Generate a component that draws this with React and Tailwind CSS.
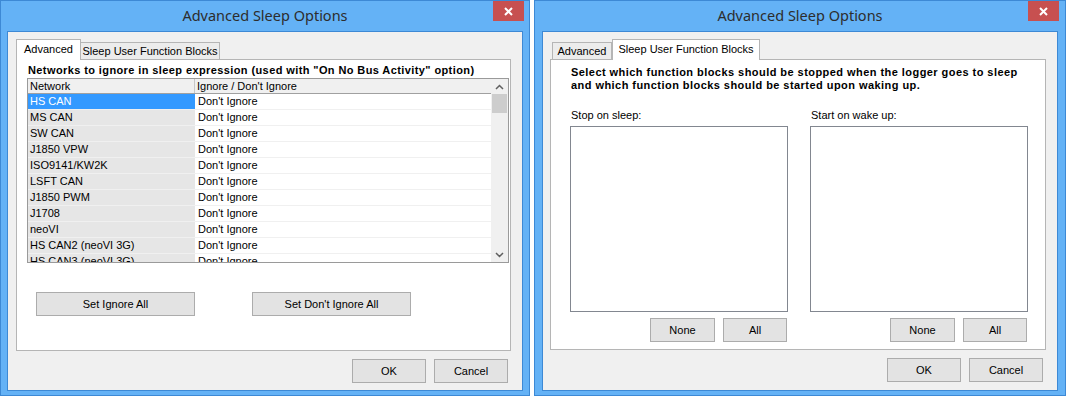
import React from 'react';

const networks = [
  'HS CAN',
  'MS CAN',
  'SW CAN',
  'J1850 VPW',
  'ISO9141/KW2K',
  'LSFT CAN',
  'J1850 PWM',
  'J1708',
  'neoVI',
  'HS CAN2 (neoVI 3G)',
  'HS CAN3 (neoVI 3G)',
];

const uiFont = "font-['Liberation_Sans',Arial,sans-serif]";

const Btn = ({ w, children }) => (
  <button
    className={`${w} h-[24px] border border-[#acacac] bg-[#e3e3e3] text-[11px] text-black ${uiFont}`}
  >
    {children}
  </button>
);

const Chevron = ({ up }) => (
  <svg width="9" height="6" viewBox="0 0 9 6">
    <polyline
      points={up ? '1,5 4.5,1.5 8,5' : '1,1 4.5,4.5 8,1'}
      fill="none"
      stroke="#606060"
      strokeWidth="1.5"
    />
  </svg>
);

const Window = ({ width, padL, padR, children }) => (
  <div className={`${width} h-[396px] border border-[#3d89d5] bg-[#64b2f6] flex flex-col ${padL} ${padR}`}>
    <div className="h-[30px] grid grid-cols-[31px_1fr_31px] -mx-px">
      <div />
      <div className="text-center text-[14.5px] leading-[28px] text-[#2d2d2d] font-['Noto_Sans',sans-serif]">
        Advanced Sleep Options
      </div>
      <div className="h-[20px] bg-[#c75050] flex items-center justify-center">
        <svg width="9" height="9" viewBox="0 0 9 9">
          <path d="M1 1 L8 8 M8 1 L1 8" stroke="white" strokeWidth="2" />
        </svg>
      </div>
    </div>
    <div className="h-[360px] border border-[#3d89d5] bg-[#f0f0f0] flex flex-col pt-[7px] pl-[7px] pr-[11px]">
      {children}
    </div>
  </div>
);

const DialogButtons = () => (
  <div className="mt-[8px] mr-[3px] flex justify-end gap-[8px]">
    <Btn w="w-[74px]">OK</Btn>
    <Btn w="w-[74px]">Cancel</Btn>
  </div>
);

const ActiveTab = ({ w, children }) => (
  <div
    className={`${w} h-[21px] -mb-px relative z-10 bg-white border border-b-0 border-[#b5b5b5] flex items-center justify-center text-[11px] pb-[2px] ${uiFont}`}
  >
    {children}
  </div>
);

const InactiveTab = ({ w, extra, children }) => (
  <div
    className={`${w} ${extra} h-[17px] bg-[#ececec] border border-b-0 border-[#b5b5b5] flex items-center justify-center text-[11px] ${uiFont}`}
  >
    {children}
  </div>
);

export default function App() {
  return (
    <div className="w-[1066px] h-[396px] bg-white flex gap-[4px] overflow-hidden">
      {/* Advanced tab dialog */}
      <Window width="w-[530px]" padL="pl-[6px]" padR="pr-[6px]">
        <div className="h-[20px] flex items-end pl-[1px]">
          <ActiveTab w="w-[65px]">Advanced</ActiveTab>
          <InactiveTab w="w-[140px]" extra="-ml-px">Sleep User Function Blocks</InactiveTab>
        </div>
        <div className={`h-[292px] ml-[1px] border border-[#b5b5b5] bg-white flex flex-col ${uiFont}`}>
          <div className="pl-[11px] pt-[4px] text-[11px] leading-[13px] font-bold tracking-[0.4px] text-black">
            Networks to ignore in sleep expression (used with "On No Bus Activity" option)
          </div>
          <div className="ml-[10px] mt-[1px] w-[482px] h-[185px] border border-[#9a9a9a] flex overflow-hidden">
            <div className="flex-1 flex flex-col overflow-hidden">
              <div className="h-[15px] shrink-0 flex bg-[#f0f0f0] border-b border-[#a0a0a0] text-[11px] leading-[14px]">
                <div className="w-[167px] pl-[2px] border-r border-[#c8c8c8]">Network</div>
                <div className="pl-[2px]">Ignore / Don't Ignore</div>
              </div>
              {networks.map((n, i) => (
                <div key={n} className="h-[16px] shrink-0 flex border-b border-[#f0f0f0] text-[11px] leading-[15px]">
                  <div
                    className={`w-[167px] pl-[2px] ${i === 0 ? 'bg-[#3399ff] text-white' : 'bg-[#e6e6e6] text-black'}`}
                  >
                    {n}
                  </div>
                  <div className="pl-[3px] text-black">Don't Ignore</div>
                </div>
              ))}
            </div>
            <div className="w-[17px] bg-[#f0f0f0] flex flex-col items-center justify-between">
              <div className="h-[15px] flex items-center">
                <Chevron up />
              </div>
              <div className="w-[15px] h-[19px] bg-[#cdcdcd] mb-auto" />
              <div className="h-[15px] flex items-center">
                <Chevron />
              </div>
            </div>
          </div>
          <div className="ml-[19px] mt-[29px] flex gap-[57px]">
            <Btn w="w-[159px]">Set Ignore All</Btn>
            <Btn w="w-[159px]">Set Don't Ignore All</Btn>
          </div>
        </div>
        <DialogButtons />
      </Window>

      {/* Sleep User Function Blocks dialog */}
      <Window width="w-[532px]" padL="pl-[7px]" padR="pr-[7px]">
        <div className="h-[20px] flex items-end">
          <InactiveTab w="w-[60px]" extra="ml-[2px]">Advanced</InactiveTab>
          <ActiveTab w="w-[148px]">Sleep User Function Blocks</ActiveTab>
        </div>
        <div className={`h-[291px] border border-[#b5b5b5] bg-white flex flex-col ${uiFont}`}>
          <div className="pl-[20px] pt-[6px] text-[11px] leading-[13px] font-bold tracking-[0.45px] text-black">
            <div>Select which function blocks should be stopped when the logger goes to sleep</div>
            <div>and which function blocks should be started upon waking up.</div>
          </div>
          <div className="mt-[17px] pl-[19px] flex gap-[22px]">
            {['Stop on sleep:', 'Start on wake up:'].map((label) => (
              <div key={label} className="w-[218px] flex flex-col">
                <div className="pl-[1px] text-[11px] leading-[13px] text-black">{label}</div>
                <div className="mt-[4px] h-[186px] border border-[#828790] bg-white" />
                <div className="mt-[6px] pr-[1px] flex justify-end gap-[8px]">
                  <Btn w="w-[65px]">None</Btn>
                  <Btn w="w-[64px]">All</Btn>
                </div>
              </div>
            ))}
          </div>
        </div>
        <DialogButtons />
      </Window>
    </div>
  );
}
